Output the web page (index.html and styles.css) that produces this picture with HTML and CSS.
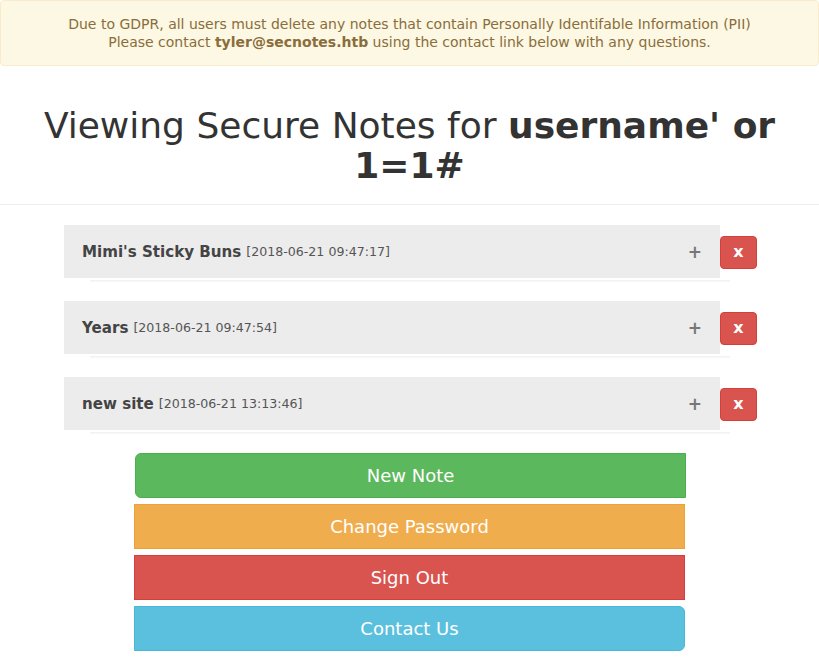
FILE: index.html
```html
<!DOCTYPE html>
<html>
<head>
<meta charset="utf-8">
<link rel="stylesheet" href="styles.css">
</head>
<body>
<div class="alert">
  Due to GDPR, all users must delete any notes that contain Personally Identifable Information (PII)<br>
  Please contact <strong>tyler@secnotes.htb</strong> using the contact link below with any questions.
</div>
<h1 class="title">Viewing Secure Notes for <strong>username' or 1=1#</strong></h1>
<hr class="sep">
<div class="notes">
  <div class="note">
    <div class="panel">
      <div class="panel-head"><span class="name">Mimi's Sticky Buns</span> <small class="date">[2018-06-21 09:47:17]</small><span class="plus">+</span></div>
      <div class="shadow"></div>
    </div>
    <button class="del">x</button>
  </div>
  <div class="note">
    <div class="panel">
      <div class="panel-head"><span class="name">Years</span> <small class="date">[2018-06-21 09:47:54]</small><span class="plus">+</span></div>
      <div class="shadow"></div>
    </div>
    <button class="del">x</button>
  </div>
  <div class="note">
    <div class="panel">
      <div class="panel-head"><span class="name">new site</span> <small class="date">[2018-06-21 13:13:46]</small><span class="plus">+</span></div>
      <div class="shadow"></div>
    </div>
    <button class="del">x</button>
  </div>
</div>
<div class="actions">
  <a class="btn green">New Note</a>
  <a class="btn orange">Change Password</a>
  <a class="btn red">Sign Out</a>
  <a class="btn blue">Contact Us</a>
</div>
</body>
</html>
```
FILE: styles.css
```css
html, body {
  margin: 0;
  padding: 0;
  background: #fff;
  font-family: "DejaVu Sans", sans-serif;
  font-size: 14px;
  color: #333;
}
.alert {
  background: #fcf8e3;
  border: 1px solid #faebcc;
  border-radius: 4px;
  color: #8a6d3b;
  text-align: center;
  padding: 14px 15px 14px;
  line-height: 18px;
}
.title {
  margin: 40px 20px 0;
  font-size: 36px;
  font-weight: normal;
  line-height: 40px;
  text-align: center;
  color: #333;
}
.title strong { font-weight: bold; }
.sep {
  border: 0;
  border-top: 1px solid #eee;
  margin: 18px 0 20px;
}
.notes {
  display: flex;
  flex-direction: column;
  gap: 20px;
  padding-left: 64px;
}
.note {
  display: flex;
  align-items: flex-start;
}
.panel {
  width: 656px;
  position: relative;
}
.panel-head {
  background: #ececec;
  height: 53px;
  display: flex;
  align-items: center;
  padding: 0 18px;
  box-sizing: border-box;
  color: #444;
}
.name {
  font-weight: bold;
  font-size: 15.1px;
}
.date {
  font-size: 12.6px;
  margin-left: 5px;
  color: #555;
}
.plus {
  margin-left: auto;
  color: #777;
  font-size: 17px;
  font-weight: bold;
}
.shadow {
  height: 1px;
  margin: 2px -10px 0 26px;
  background: #f3f3f3;
  box-shadow: 0 1px 1px #f6f6f6;
}
.del {
  margin-top: 11px;
  width: 37px;
  height: 33px;
  background: #d9534f;
  border: 1px solid #d43f3a;
  border-radius: 4px;
  color: #fff;
  font-family: "DejaVu Sans", sans-serif;
  font-weight: bold;
  font-size: 16px;
  padding: 0 0 2px;
  line-height: 1;
}
.actions {
  display: flex;
  flex-direction: column;
  width: 551px;
  margin: 20px 0 0 134px;
  gap: 6px;
}
.btn {
  display: block;
  height: 45px;
  box-sizing: border-box;
  border: 1px solid;
  color: #fff;
  font-size: 18px;
  line-height: 43px;
  text-align: center;
}
.green {
  background: #5cb85c;
  border-color: #4cae4c;
  border-radius: 6px 0 0 6px;
  margin-left: 1px;
  margin-right: -1px;
}
.orange { background: #f0ad4e; border-color: #eea236; }
.red { background: #d9534f; border-color: #d43f3a; }
.blue {
  background: #5bc0de;
  border-color: #46b8da;
  border-radius: 0 6px 6px 0;
}
```
